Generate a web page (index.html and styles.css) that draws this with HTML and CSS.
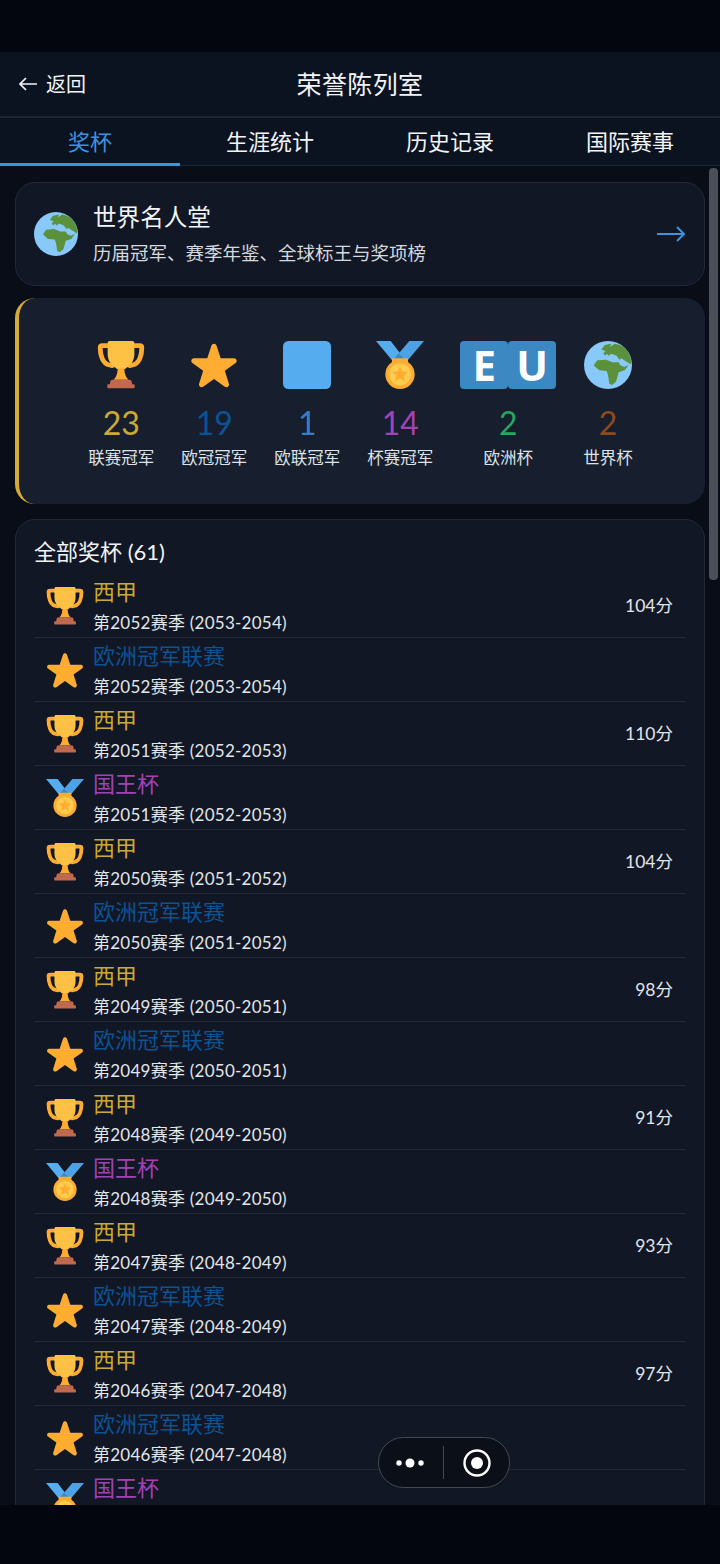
FILE: index.html
```html
<!DOCTYPE html>
<html lang="zh">
<head>
    <meta charset="utf-8">
    <title>荣誉陈列室</title>
    <link rel="stylesheet" href="styles.css">
</head>
<body>
    <svg class="sprites" width="0" height="0">
        <symbol id="trophy" viewBox="0 0 36 36">
            <path d="M10 3.500H4C3 3.500 2.400 4.200 2.400 5c0 5 1.500 12 7 13l2 .4" fill="none" stroke="#ffac33" stroke-width="3.600" stroke-linecap="round"/>
            <path d="M26 3.500h6c1 0 1.600.7 1.600 1.500 0 5-1.500 12-7 13l-2 .4" fill="none" stroke="#ffac33" stroke-width="3.600" stroke-linecap="round"/>
            <path d="M8 1.500C8 .6 8.600 0 9.500 0h17c.9 0 1.500.6 1.500 1.500V10c0 6-4 9-7 11h-6c-3-2-7-5-7-11z" fill="#fdc245"/>
            <path d="M15.500 20.500h5c0 3 .5 6 3 8.500h-11c2.500-2.500 3-5.500 3-8.500z" fill="#ffac33"/>
            <path d="M10 30.500c0-1 .7-1.500 1.500-1.500h13c.8 0 1.500.5 1.500 1.500l.4 2h1.100c.5 0 .8.4.8 1.500s-.3 1.500-.8 1.500h-19c-.5 0-.8-.4-.8-1.500s.3-1.500.8-1.500h1.100z" fill="#c1694f"/>
        </symbol>
        <symbol id="star" viewBox="0 0 36 36">
            <path fill="#ffac33" d="M27.287 34.627c-.404 0-.806-.124-1.152-.371L18 28.422l-8.135 5.834c-.693.496-1.623.496-2.312-.008-.689-.499-.979-1.385-.721-2.194l3.034-9.792-8.062-5.681c-.685-.505-.97-1.393-.708-2.203.264-.808 1.016-1.357 1.866-1.363L12.947 13l3.179-9.549c.268-.809 1.023-1.353 1.874-1.353.851 0 1.606.545 1.875 1.353L23 13l10.036.015c.853.006 1.606.556 1.867 1.363.263.81-.022 1.698-.708 2.203l-8.062 5.681 3.034 9.792c.26.809-.033 1.695-.72 2.194-.347.254-.753.379-1.160.379z"/>
        </symbol>
        <symbol id="square" viewBox="0 0 36 36">
            <rect width="36" height="36" rx="4" fill="#55acee"/>
        </symbol>
        <symbol id="medal" viewBox="0 0 36 36">
            <path d="M0 0h11l10 13-6 5z" fill="#55acee"/>
            <path d="M36 0H25L13 14l7 5z" fill="#4ea2e3"/>
            <path d="M13 14l4-4.700 4 3.700-3 6z" fill="#3b88c3"/>
            <path d="M12 13h12v6H12z" fill="#ffac33"/>
            <circle cx="18" cy="25" r="11" fill="#ffac33"/>
            <circle cx="18" cy="25" r="8.200" fill="#ffcc4d"/>
            <path d="M18 19l1.700 3.900 4.300.3-3.200 2.800 1 4.200-3.800-2.300-3.800 2.300 1-4.200-3.200-2.800 4.300-.3z" fill="#ffac33"/>
        </symbol>
        <symbol id="globe" viewBox="0 0 36 36">
            <circle cx="18" cy="18" r="18" fill="#88c9f9"/>
            <path d="M13 6.500l2.500-3.500 5-1-1 2.500 3.500-2.500 4 1 4 2.500 3 4.500 1.500 5-.5 2.500-4-2.500-3-2-1.500 1-2-3-4-1.500-2 1.500-1.500-1.500-1 1.500-1.500-1.500 1.500-2-1.500-.5z" fill="#5c913b"/>
            <path d="M7.500 18l2.500-3.500 6.500-.5 5 2 4.500 0 1 2 3 1.500 3.500-1.500-3 4-4.500 1.500-2 7-3 2.500-2-1-1-6.500-1-3-5.500-.5-4-3.500z" fill="#5c913b"/>
        </symbol>
    </svg>

    <div class="phone">
        <div class="status-bar"></div>

        <header class="nav-bar">
            <a class="back">
                <svg class="back-arrow" viewBox="0 0 18 14"><path d="M18 7H1M7 1L1 7l6 6" fill="none" stroke="#f2f4f7" stroke-width="1.700"/></svg>
                返回
            </a>
            <h1>荣誉陈列室</h1>
        </header>

        <nav class="tabs">
            <div class="tab active">奖杯</div>
            <div class="tab">生涯统计</div>
            <div class="tab">历史记录</div>
            <div class="tab">国际赛事</div>
        </nav>

        <main class="content">
            <div class="scrollbar"></div>

            <section class="card hall">
                <svg class="hall-icon"><use href="#globe"/></svg>
                <div class="hall-text">
                    <div class="hall-title">世界名人堂</div>
                    <div class="hall-sub">历届冠军、赛季年鉴、全球标王与奖项榜</div>
                </div>
                <svg class="hall-arrow" viewBox="0 0 30 20"><path d="M1 10h27M21 3l7 7-7 7" fill="none" stroke="#3b94e0" stroke-width="2"/></svg>
            </section>

            <section class="summary">
                <div class="stat">
                    <svg class="stat-icon"><use href="#trophy"/></svg>
                    <div class="stat-num c-league">23</div>
                    <div class="stat-label">联赛冠军</div>
                </div>
                <div class="stat">
                    <svg class="stat-icon"><use href="#star"/></svg>
                    <div class="stat-num c-ucl">19</div>
                    <div class="stat-label">欧冠冠军</div>
                </div>
                <div class="stat">
                    <svg class="stat-icon"><use href="#square"/></svg>
                    <div class="stat-num c-uel">1</div>
                    <div class="stat-label">欧联冠军</div>
                </div>
                <div class="stat">
                    <svg class="stat-icon"><use href="#medal"/></svg>
                    <div class="stat-num c-cup">14</div>
                    <div class="stat-label">杯赛冠军</div>
                </div>
                <div class="stat">
                    <div class="eu-flag"><span>E</span><span>U</span></div>
                    <div class="stat-num c-euro">2</div>
                    <div class="stat-label">欧洲杯</div>
                </div>
                <div class="stat">
                    <svg class="stat-icon"><use href="#globe"/></svg>
                    <div class="stat-num c-world">2</div>
                    <div class="stat-label">世界杯</div>
                </div>
            </section>

            <section class="card list">
                <h2>全部奖杯 (61)</h2>
                <div class="row"><svg class="row-icon"><use href="#trophy"/></svg><div class="row-text"><div class="row-name c-league">西甲</div><div class="row-season">第2052赛季 (2053-2054)</div></div><div class="row-points">104分</div></div>
                <div class="row"><svg class="row-icon"><use href="#star"/></svg><div class="row-text"><div class="row-name c-ucl">欧洲冠军联赛</div><div class="row-season">第2052赛季 (2053-2054)</div></div></div>
                <div class="row"><svg class="row-icon"><use href="#trophy"/></svg><div class="row-text"><div class="row-name c-league">西甲</div><div class="row-season">第2051赛季 (2052-2053)</div></div><div class="row-points">110分</div></div>
                <div class="row"><svg class="row-icon"><use href="#medal"/></svg><div class="row-text"><div class="row-name c-cup">国王杯</div><div class="row-season">第2051赛季 (2052-2053)</div></div></div>
                <div class="row"><svg class="row-icon"><use href="#trophy"/></svg><div class="row-text"><div class="row-name c-league">西甲</div><div class="row-season">第2050赛季 (2051-2052)</div></div><div class="row-points">104分</div></div>
                <div class="row"><svg class="row-icon"><use href="#star"/></svg><div class="row-text"><div class="row-name c-ucl">欧洲冠军联赛</div><div class="row-season">第2050赛季 (2051-2052)</div></div></div>
                <div class="row"><svg class="row-icon"><use href="#trophy"/></svg><div class="row-text"><div class="row-name c-league">西甲</div><div class="row-season">第2049赛季 (2050-2051)</div></div><div class="row-points">98分</div></div>
                <div class="row"><svg class="row-icon"><use href="#star"/></svg><div class="row-text"><div class="row-name c-ucl">欧洲冠军联赛</div><div class="row-season">第2049赛季 (2050-2051)</div></div></div>
                <div class="row"><svg class="row-icon"><use href="#trophy"/></svg><div class="row-text"><div class="row-name c-league">西甲</div><div class="row-season">第2048赛季 (2049-2050)</div></div><div class="row-points">91分</div></div>
                <div class="row"><svg class="row-icon"><use href="#medal"/></svg><div class="row-text"><div class="row-name c-cup">国王杯</div><div class="row-season">第2048赛季 (2049-2050)</div></div></div>
                <div class="row"><svg class="row-icon"><use href="#trophy"/></svg><div class="row-text"><div class="row-name c-league">西甲</div><div class="row-season">第2047赛季 (2048-2049)</div></div><div class="row-points">93分</div></div>
                <div class="row"><svg class="row-icon"><use href="#star"/></svg><div class="row-text"><div class="row-name c-ucl">欧洲冠军联赛</div><div class="row-season">第2047赛季 (2048-2049)</div></div></div>
                <div class="row"><svg class="row-icon"><use href="#trophy"/></svg><div class="row-text"><div class="row-name c-league">西甲</div><div class="row-season">第2046赛季 (2047-2048)</div></div><div class="row-points">97分</div></div>
                <div class="row"><svg class="row-icon"><use href="#star"/></svg><div class="row-text"><div class="row-name c-ucl">欧洲冠军联赛</div><div class="row-season">第2046赛季 (2047-2048)</div></div></div>
                <div class="row"><svg class="row-icon"><use href="#medal"/></svg><div class="row-text"><div class="row-name c-cup">国王杯</div><div class="row-season"></div></div></div>
            </section>

            <div class="capsule">
                <svg class="capsule-dots" viewBox="0 0 28 10"><circle cx="3" cy="5" r="2.700"/><circle cx="14" cy="5" r="4.500"/><circle cx="25" cy="5" r="2.700"/></svg>
                <span class="capsule-line"></span>
                <svg class="capsule-target" viewBox="0 0 28 28"><circle cx="14" cy="14" r="12.500" fill="none" stroke="#fff" stroke-width="2.400"/><circle cx="14" cy="14" r="6"/></svg>
            </div>
        </main>

        <div class="bottom-bar"></div>
    </div>
</body>
</html>
```

FILE: styles.css
```css
* {
    box-sizing: border-box;
}
body {
    margin: 0;
    background: #03060f;
    font-family: "Lato", "Noto Sans CJK SC", sans-serif;
    color: #f2f4f7;
}
.sprites {
    position: absolute;
}
.phone {
    width: 720px;
    height: 1564px;
    display: flex;
    flex-direction: column;
    overflow: hidden;
}
.status-bar {
    height: 52px;
    background: #03060f;
}
.nav-bar {
    height: 66px;
    background: #0b1220;
    border-bottom: 2px solid #1a2230;
    padding-bottom: 2px;
    display: flex;
    align-items: center;
    justify-content: center;
    position: relative;
}
.nav-bar h1 {
    margin: 0;
    font-size: 25px;
    font-weight: 400;
    letter-spacing: 0.4px;
}
.back {
    position: absolute;
    left: 19px;
    top: 18px;
    font-size: 20px;
    line-height: 28px;
    display: flex;
    align-items: center;
    gap: 9px;
}
.back-arrow {
    width: 18px;
    height: 14px;
}
.tabs {
    height: 48px;
    background: #0b1220;
    border-bottom: 1px solid #1f2735;
    display: flex;
}
.tab {
    flex: 1;
    text-align: center;
    font-size: 22px;
    line-height: 47px;
    height: 48px;
}
.tab.active {
    color: #3b94e0;
    border-bottom: 3px solid #3b94e0;
}
.content {
    flex: 1;
    height: 1339px;
    background: #080d18;
    padding: 16px 15px 0;
    position: relative;
    overflow: hidden;
    display: flex;
    flex-direction: column;
}
.scrollbar {
    position: absolute;
    right: 2px;
    top: 2px;
    width: 9px;
    height: 412px;
    border-radius: 4px;
    background: #4b5058;
}
.card {
    background: #111724;
    border: 1px solid #212937;
    border-radius: 20px;
}
.hall {
    flex: none;
    height: 104px;
    display: flex;
    align-items: center;
    padding: 0 18px;
}
.hall-icon {
    width: 44px;
    height: 44px;
    margin-right: 15px;
    flex: none;
}
.hall-text {
    flex: 1;
    padding-bottom: 1px;
}
.hall-title {
    font-size: 23.600px;
    line-height: 32px;
}
.hall-sub {
    font-size: 18.500px;
    line-height: 26px;
    margin-top: 7px;
    color: #d5d9df;
}
.hall-arrow {
    width: 30px;
    height: 20px;
}
.summary {
    flex: none;
    height: 206px;
    margin-top: 12px;
    background: #171e2d;
    border-left: 4px solid #d2ac36;
    border-radius: 20px;
    display: flex;
    justify-content: center;
    gap: 27px;
    padding: 43px 3px 0 0;
}
.stat {
    display: flex;
    flex-direction: column;
    align-items: center;
}
.stat-icon {
    width: 48px;
    height: 48px;
}
.eu-flag {
    display: flex;
    height: 48px;
}
.eu-flag span {
    width: 48px;
    height: 48px;
    border-radius: 4px;
    background: #3b88c3;
    color: #fff;
    font-family: "Noto Sans", sans-serif;
    font-weight: 700;
    font-size: 42px;
    line-height: 47px;
    text-align: center;
}
.stat-num {
    font-size: 32px;
    line-height: 40px;
    margin-top: 14px;
}
.stat-label {
    font-size: 16.500px;
    line-height: 24px;
    margin-top: 3px;
    color: #dfe3e8;
}
.c-league { color: #cda935; }
.c-ucl { color: #0b5394; }
.c-uel { color: #3a7dc2; }
.c-cup { color: #a143b5; }
.c-euro { color: #28a55f; }
.c-world { color: #8b4b1e; }
.list {
    flex: none;
    margin-top: 15px;
    padding: 17px 18px 0;
    height: 1100px;
}
.list h2 {
    margin: 0 0 7px;
    font-size: 22px;
    line-height: 30px;
    font-weight: 400;
}
.row {
    height: 64px;
    display: flex;
    align-items: center;
    border-bottom: 1px solid #212937;
    padding-right: 13px;
}
.row-icon {
    width: 38px;
    height: 38px;
    margin-left: 12px;
    margin-right: 9px;
    flex: none;
}
.row-text {
    flex: 1;
    padding-top: 1px;
}
.row-name {
    font-size: 22px;
    line-height: 28px;
}
.row-season {
    font-size: 17px;
    line-height: 24px;
    height: 24px;
    margin-top: 5px;
    letter-spacing: 0.25px;
    color: #e3e6ea;
}
.row-points {
    font-size: 17.500px;
    margin-top: -2px;
    color: #e3e6ea;
}
.capsule {
    position: absolute;
    left: 378px;
    top: 1271px;
    width: 132px;
    height: 51px;
    border: 1px solid #444a52;
    border-radius: 26px;
    background: #0b0f17;
    display: flex;
    align-items: center;
    padding-left: 17px;
}
.capsule-dots {
    width: 28px;
    height: 10px;
    fill: #fff;
}
.capsule-line {
    width: 1px;
    height: 33px;
    background: #444a52;
    margin: 0 19px;
}
.capsule-target {
    width: 28px;
    height: 28px;
    fill: #fff;
}
.bottom-bar {
    height: 59px;
    background: #03060f;
    flex: none;
}
```
